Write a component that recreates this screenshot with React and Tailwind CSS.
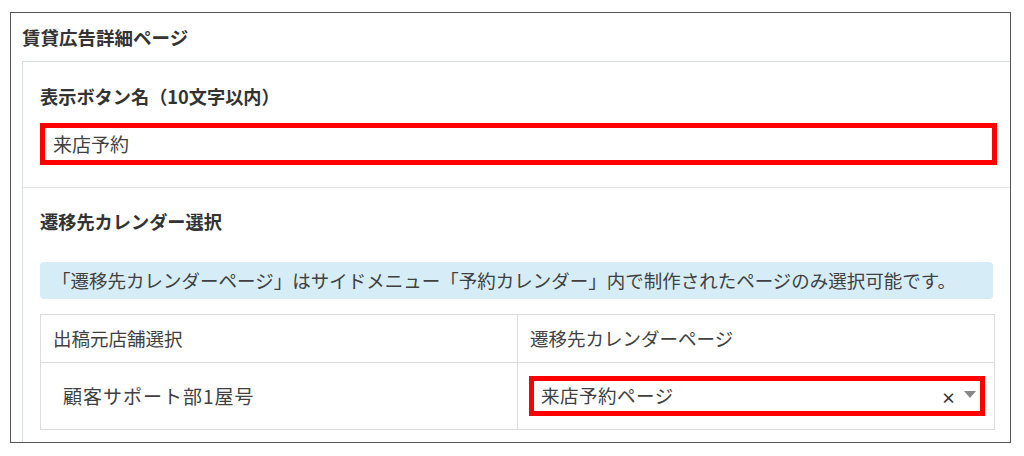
import React from "react";

export default function App() {
  return (
    <div
      className="w-[1024px] h-[456px] bg-white pt-[12px] pl-[10px] text-[#404040]"
      style={{ fontFamily: '"Noto Sans CJK JP", "Noto Sans", sans-serif' }}
    >
      <div className="w-[1001px] h-[431px] border-[1.5px] border-[#555] overflow-hidden flex flex-col">
        <div className="h-[48px] shrink-0 flex items-center pl-[11px] font-bold text-[18.5px] leading-none text-[#333]">
          賃貸広告詳細ページ
        </div>
        <div className="ml-[11px] flex-1 border-l border-t border-[#d8dde3] flex flex-col">
          <div className="pl-[17px] pr-[13px] pt-[22px] pb-[22px] border-b border-[#e3e6ea]">
            <div className="h-[26px] flex items-center font-bold text-[18.2px] text-[#333]">
              表示ボタン名（10文字以内）
            </div>
            <div className="mt-[13px] h-[42px] border-[5px] border-[#ff0000] flex items-center pl-[8px] text-[19px]">
              来店予約
            </div>
          </div>
          <div className="pl-[17px] pt-[21px]">
            <div className="h-[26px] flex items-center font-bold text-[18.2px] text-[#333]">
              遷移先カレンダー選択
            </div>
            <div className="mt-[27px] mr-[17px] h-[37px] rounded-[4px] bg-[#d6edf7] flex items-center pl-[12px] text-[18.5px] whitespace-nowrap">
              「遷移先カレンダーページ」はサイドメニュー「予約カレンダー」内で制作されたページのみ選択可能です。
            </div>
            <div className="mt-[15px] mr-[15px] border border-[#dcdcdc] text-[18.5px]">
              <div className="flex h-[48px] border-b border-[#dcdcdc]">
                <div className="w-[477px] flex items-center pl-[12px] border-r border-[#dcdcdc]">
                  出稿元店舗選択
                </div>
                <div className="flex-1 flex items-center pl-[12px]">
                  遷移先カレンダーページ
                </div>
              </div>
              <div className="flex h-[66px]">
                <div className="w-[477px] flex items-center pl-[22px] border-r border-[#dcdcdc] text-[19px] tracking-[1px]">
                  顧客サポート部1屋号
                </div>
                <div className="flex-1 flex items-center pl-[11px] pr-[9px]">
                  <div className="w-full h-[40px] border-[5px] border-[#ff0000] flex items-center pl-[7px] pr-[4px]">
                    <span className="flex-1 tracking-[0.5px]">来店予約ページ</span>
                    <span className="text-[#333] text-[15px] font-bold leading-none mr-[8px] mt-[2px]">×</span>
                    <svg width="12" height="7" viewBox="0 0 12 7" className="mb-[4px]">
                      <path d="M0 0 L12 0 L6 7 Z" fill="#888" />
                    </svg>
                  </div>
                </div>
              </div>
            </div>
          </div>
        </div>
      </div>
    </div>
  );
}
